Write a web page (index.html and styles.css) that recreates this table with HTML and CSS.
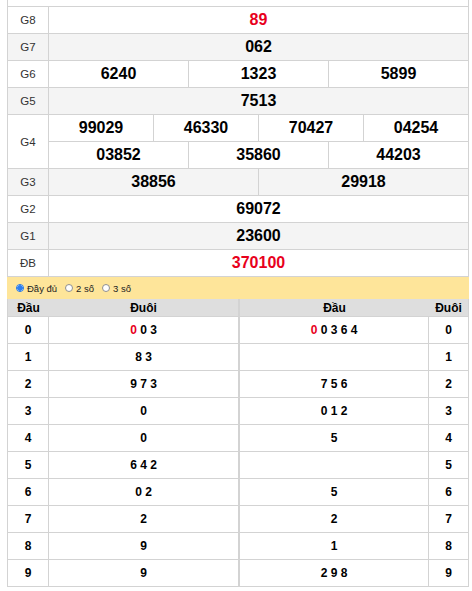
FILE: index.html
```html
<!DOCTYPE html>
<html lang="vi">
<head>
<meta charset="utf-8">
<title>KQXS</title>
<link rel="stylesheet" href="styles.css">
</head>
<body>
<div class="page">
  <div class="board">
    <div class="row cut"></div>
    <div class="row"><div class="lbl">G8</div><div class="cell red">89</div></div>
    <div class="row alt"><div class="lbl">G7</div><div class="cell">062</div></div>
    <div class="row"><div class="lbl">G6</div><div class="cell">6240</div><div class="cell">1323</div><div class="cell">5899</div></div>
    <div class="row alt"><div class="lbl">G5</div><div class="cell">7513</div></div>
    <div class="row">
      <div class="lbl tall">G4</div>
      <div class="sub">
        <div class="subrow"><div class="cell">99029</div><div class="cell">46330</div><div class="cell">70427</div><div class="cell">04254</div></div>
        <div class="subrow"><div class="cell">03852</div><div class="cell">35860</div><div class="cell">44203</div></div>
      </div>
    </div>
    <div class="row alt"><div class="lbl">G3</div><div class="cell">38856</div><div class="cell">29918</div></div>
    <div class="row"><div class="lbl">G2</div><div class="cell">69072</div></div>
    <div class="row alt"><div class="lbl">G1</div><div class="cell">23600</div></div>
    <div class="row"><div class="lbl">ĐB</div><div class="cell red">370100</div></div>
  </div>

  <div class="filter">
    <label class="opt"><span class="radio on"></span>Đầy đủ</label>
    <label class="opt"><span class="radio"></span>2 số</label>
    <label class="opt"><span class="radio"></span>3 số</label>
  </div>

  <div class="loto">
    <div class="ltbl left">
      <div class="lhead"><span>Đầu</span><span>Đuôi</span></div>
      <div class="lrow"><span class="k">0</span><span class="v"><b class="r">0</b> 0 3</span></div>
      <div class="lrow"><span class="k">1</span><span class="v">8 3</span></div>
      <div class="lrow"><span class="k">2</span><span class="v">9 7 3</span></div>
      <div class="lrow"><span class="k">3</span><span class="v">0</span></div>
      <div class="lrow"><span class="k">4</span><span class="v">0</span></div>
      <div class="lrow"><span class="k">5</span><span class="v">6 4 2</span></div>
      <div class="lrow"><span class="k">6</span><span class="v">0 2</span></div>
      <div class="lrow"><span class="k">7</span><span class="v">2</span></div>
      <div class="lrow"><span class="k">8</span><span class="v">9</span></div>
      <div class="lrow"><span class="k">9</span><span class="v">9</span></div>
    </div>
    <div class="ltbl right">
      <div class="lhead"><span>Đầu</span><span>Đuôi</span></div>
      <div class="lrow"><span class="v"><b class="r">0</b> 0 3 6 4</span><span class="k">0</span></div>
      <div class="lrow"><span class="v"></span><span class="k">1</span></div>
      <div class="lrow"><span class="v">7 5 6</span><span class="k">2</span></div>
      <div class="lrow"><span class="v">0 1 2</span><span class="k">3</span></div>
      <div class="lrow"><span class="v">5</span><span class="k">4</span></div>
      <div class="lrow"><span class="v"></span><span class="k">5</span></div>
      <div class="lrow"><span class="v">5</span><span class="k">6</span></div>
      <div class="lrow"><span class="v">2</span><span class="k">7</span></div>
      <div class="lrow"><span class="v">1</span><span class="k">8</span></div>
      <div class="lrow"><span class="v">2 9 8</span><span class="k">9</span></div>
    </div>
  </div>
</div>
</body>
</html>
```

FILE: styles.css
```css
* { box-sizing: border-box; }
html, body { margin: 0; padding: 0; background: #fff; }
body { font-family: "Liberation Sans", Arial, sans-serif; color: #000; }

.page { margin-left: 7px; width: 462px; }

.board { border-left: 1px solid #d3d3d3; border-right: 1px solid #d3d3d3; }
.row { display: flex; border-bottom: 1px solid #d3d3d3; height: 27px; background: #fff; }
.row.cut { height: 7px; }
.row.alt { background: #f4f4f4; }
.row:has(.tall) { height: 54px; }

.lbl {
  width: 40px; flex: none;
  display: flex; align-items: center; justify-content: center;
  font-size: 11.5px; color: #333;
}
.cell {
  flex: 1 1 0; min-width: 0;
  border-left: 1px solid #d3d3d3;
  display: flex; align-items: center; justify-content: center;
  font-weight: bold; font-size: 16px;
}
.red { color: #e8001c; }

.sub { flex: 1 1 0; display: flex; flex-direction: column; }
.subrow { display: flex; height: 27px; }
.subrow:first-child { height: 27px; border-bottom: 1px solid #d3d3d3; }
.subrow:last-child { height: 26px; }

.filter {
  height: 22px; background: #fee59a;
  display: flex; align-items: center; gap: 8px;
  padding-left: 9px;
  font-size: 9.5px; color: #222;
}
.opt { display: flex; align-items: center; gap: 3px; }
.radio {
  width: 8px; height: 8px; border-radius: 50%;
  border: 1px solid #8f8f8f; background: #fff;
}
.radio.on { border-color: #1a73e8; background: radial-gradient(circle, #2d7ff0 0 2.5px, #fff 3px); }

.loto { display: flex; }
.ltbl { border: 1px solid #d3d3d3; border-top: none; border-bottom: none; }
.ltbl.left { width: 232px; }
.ltbl.right { width: 230px; }
.ltbl.left .lhead, .ltbl.left .lrow { display: grid; grid-template-columns: 41px 1fr; }
.ltbl.right .lhead, .ltbl.right .lrow { display: grid; grid-template-columns: 1fr 39px; }

.lhead {
  height: 18px; background: #dedede; border-bottom: 1px solid #d3d3d3;
  font-weight: bold; font-size: 12px;
}
.lhead span { display: flex; align-items: center; justify-content: center; }
.lrow { height: 27px; border-bottom: 1px solid #d3d3d3; font-weight: bold; font-size: 12px; }
.lrow span { display: flex; align-items: center; justify-content: center; white-space: pre; }
.left .lrow .k { border-right: 1px solid #d3d3d3; }
.right .lrow .v { border-right: 1px solid #d3d3d3; }
.r { color: #e8001c; }
```
